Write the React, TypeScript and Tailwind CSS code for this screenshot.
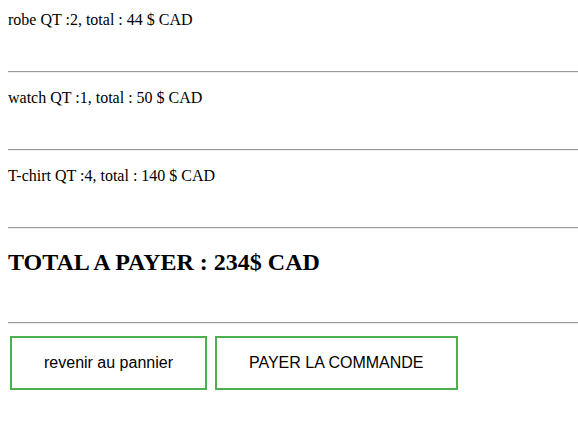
const items = [
  { name: 'robe', qty: 2, total: 44 },
  { name: 'watch', qty: 1, total: 50 },
  { name: 'T-chirt', qty: 4, total: 140 },
];

function Rule() {
  return <hr className="h-0 border-0 border-t border-b border-t-[#9a9a9a] border-b-[#eeeeee]" />;
}

export default function App() {
  return (
    <div className="min-h-screen bg-white pl-2 pt-[11px] font-['Liberation_Serif',_'Times_New_Roman',_serif] text-[16px] text-black">
      {items.map((item, i) => (
        <div key={item.name} className={i === 0 ? '' : 'mt-4'}>
          <div className="h-[60px] leading-[18px]">
            {item.name} QT :{item.qty}, total : {item.total} $ CAD
          </div>
          <Rule />
        </div>
      ))}

      <h2 className="mt-[19px] h-[74px] text-[24px] font-bold leading-[28px]">TOTAL A PAYER : 234$ CAD</h2>
      <Rule />

      <div className="mt-3 ml-[2px] flex gap-2 font-['Liberation_Sans',_Arial,_sans-serif]">
        <button className="border-2 border-[#4CAF50] bg-white px-8 py-4 text-[16px] leading-[18px] text-black">
          revenir au pannier
        </button>
        <button className="border-2 border-[#4CAF50] bg-white px-8 py-4 text-[16px] leading-[18px] text-black">
          PAYER LA COMMANDE
        </button>
      </div>
    </div>
  );
}
